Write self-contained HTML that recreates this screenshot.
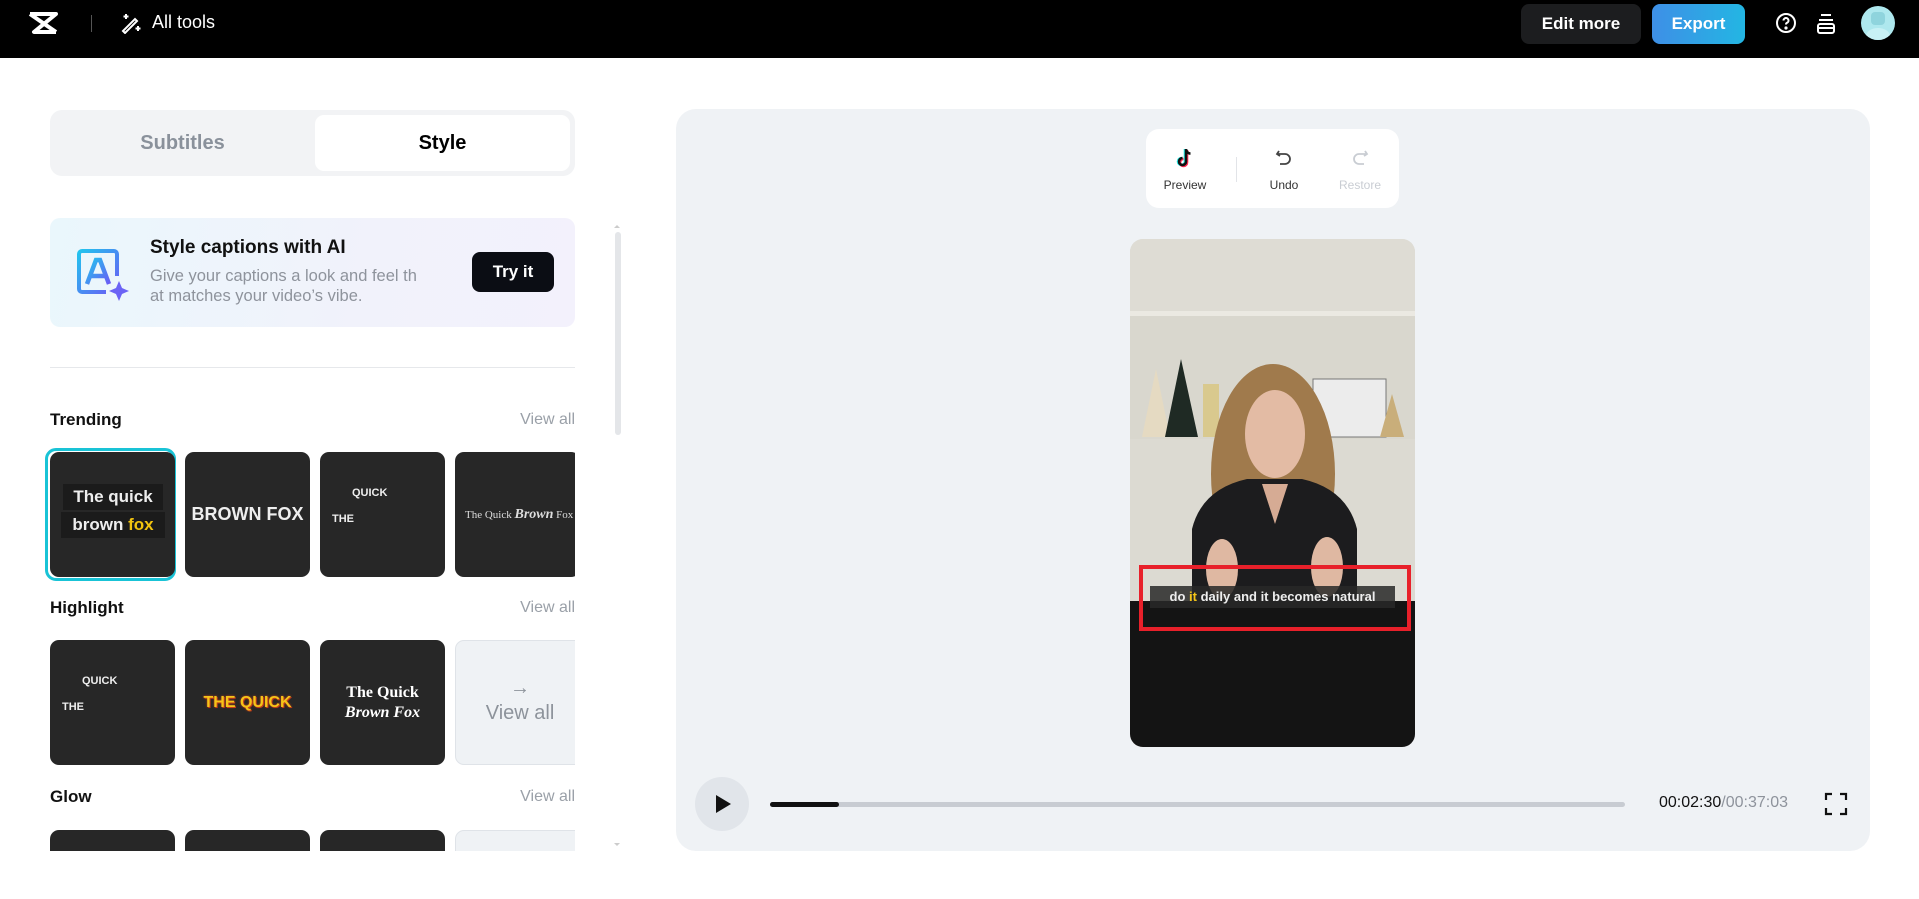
<!DOCTYPE html>
<html><head><meta charset="utf-8"><style>
*{margin:0;padding:0;box-sizing:border-box}
html,body{overflow:hidden}
body{width:1919px;height:899px;background:#fff;font-family:"Liberation Sans",sans-serif;position:relative}
.a{position:absolute}
.hdr{left:0;top:0;width:1919px;height:58px;background:#000}
.card{background:#272727;border-radius:9px;width:125px;height:125px;overflow:hidden}
.lbl{font-size:17px;font-weight:bold;color:#111}
.va{font-size:16px;color:#9aa0a8;right:1344px}
</style></head><body>
<div class="a hdr">
 <svg class="a" style="left:27px;top:11px" width="32" height="24" viewBox="0 0 32 24"><path d="M3 3h26L7 21h22" stroke="#fff" stroke-width="4" fill="none" stroke-linejoin="round"/><path d="M3 3l26 18" stroke="#fff" stroke-width="4"/></svg>
 <div class="a" style="left:91px;top:15px;width:1px;height:17px;background:#555"></div>
 <svg class="a" style="left:120px;top:12px" width="22" height="22" viewBox="0 0 22 22" fill="none" stroke="#fff" stroke-width="2"><path d="M3 19L15 7l2 2L5 21z"/><path d="M6 2v5M3.5 4.5h5M18 14v5M15.5 16.5h5"/></svg>
 <div class="a" style="left:152px;top:12px;color:#fff;font-size:18px">All tools</div>
 <div class="a" style="left:1521px;top:4px;width:120px;height:40px;background:#1c1d1f;border-radius:8px;color:#fff;font-size:17px;font-weight:bold;text-align:center;line-height:40px">Edit more</div>
 <div class="a" style="left:1652px;top:4px;width:93px;height:40px;background:linear-gradient(90deg,#3e8fe6,#23b6e3);border-radius:8px;color:#fff;font-size:17px;font-weight:bold;text-align:center;line-height:40px">Export</div>
 <svg class="a" style="left:1775px;top:12px" width="22" height="22" viewBox="0 0 22 22" fill="none" stroke="#fff" stroke-width="2"><circle cx="11" cy="11" r="9"/><path d="M8.5 8.5a2.5 2.5 0 1 1 3.5 2.3c-.7.4-1 .9-1 1.7"/><circle cx="11" cy="16" r=".6" fill="#fff"/></svg>
 <svg class="a" style="left:1815px;top:12px" width="22" height="24" viewBox="0 0 22 24" fill="none" stroke="#fff" stroke-width="2"><path d="M6 3h10M4 8h14"/><rect x="3" y="12" width="16" height="9" rx="2"/><path d="M3 16h16"/></svg>
 <div class="a" style="left:1861px;top:6px;width:34px;height:34px;border-radius:50%;background:#aee8ee;overflow:hidden"><div class="a" style="left:10px;top:6px;width:14px;height:13px;border-radius:4px;background:#8fd4dd"></div><div class="a" style="left:5px;top:22px;width:24px;height:16px;border-radius:50%;background:#c8f1f5"></div></div>
</div>

<div class="a" style="left:50px;top:110px;width:525px;height:66px;background:#f2f3f5;border-radius:12px"></div>
<div class="a" style="left:315px;top:115px;width:255px;height:56px;background:#fff;border-radius:9px"></div>
<div class="a" style="left:50px;top:110px;width:265px;height:66px;line-height:66px;text-align:center;font-size:20px;font-weight:bold;color:#8a919b">Subtitles</div>
<div class="a" style="left:315px;top:110px;width:255px;height:66px;line-height:66px;text-align:center;font-size:20px;font-weight:bold;color:#000">Style</div>

<div class="a" style="left:50px;top:218px;width:525px;height:109px;border-radius:10px;background:linear-gradient(100deg,#eaf7fc,#f1f2fb 60%,#f3f1fc)"></div>
<svg class="a" style="left:76px;top:248px" width="54" height="54" viewBox="0 0 54 54"><defs><linearGradient id="g" x1="0" y1="0" x2="1" y2="1"><stop offset="0" stop-color="#22c3ee"/><stop offset="1" stop-color="#6a5cf5"/></linearGradient></defs><path d="M30 44H6a3 3 0 0 1-3-3V6a3 3 0 0 1 3-3h32a3 3 0 0 1 3 3v22" fill="none" stroke="url(#g)" stroke-width="4"/><path d="M11 36l9-24h4l9 24M14 28h16" fill="none" stroke="url(#g)" stroke-width="4.5"/><path d="M43 33l3 7 7 3-7 3-3 7-3-7-7-3 7-3z" fill="#6b63f5"/></svg>
<div class="a" style="left:150px;top:237px;font-size:19px;font-weight:bold;color:#111">Style captions with AI</div>
<div class="a" style="left:150px;top:266px;font-size:16.5px;line-height:20px;color:#8e939c;width:320px">Give your captions a look and feel th<br>at matches your video’s vibe.</div>
<div class="a" style="left:472px;top:252px;width:82px;height:40px;background:#0b0d14;border-radius:8px;color:#fff;font-size:17px;font-weight:bold;text-align:center;line-height:40px">Try it</div>

<div class="a" style="left:50px;top:367px;width:525px;height:1px;background:#e6e8eb"></div>
<div class="a" style="left:614px;top:222px;width:0;height:0;border:3px solid transparent;border-bottom-color:#ccc"></div>
<div class="a" style="left:615px;top:232px;width:6px;height:203px;background:#e4e6e9;border-radius:3px"></div>
<div class="a" style="left:614px;top:843px;width:0;height:0;border:3px solid transparent;border-top-color:#ccc"></div>

<div class="a lbl" style="left:50px;top:410px">Trending</div><div class="a va" style="top:411px">View all</div>
<div class="a lbl" style="left:50px;top:598px">Highlight</div><div class="a va" style="top:599px">View all</div>
<div class="a lbl" style="left:50px;top:787px">Glow</div><div class="a va" style="top:788px">View all</div>

<div class="a" style="left:44px;top:446px;width:531px;height:137px;overflow:hidden">
 <div class="a" style="left:1px;top:2px;width:131px;height:133px;border:3px solid #19c3d6;border-radius:11px"></div>
 <div class="a card" style="left:6px;top:6px">
  <div class="a" style="left:13px;top:32px;width:100px;height:26px;background:#1b1b1b;color:#eee;font-weight:bold;font-size:17px;text-align:center;line-height:26px">The quick</div>
  <div class="a" style="left:11px;top:60px;width:104px;height:26px;background:#1b1b1b;color:#eee;font-weight:bold;font-size:17px;text-align:center;line-height:26px">brown <span style="color:#f2c40f">fox</span></div>
 </div>
 <div class="a card" style="left:141px;top:6px"><div style="text-align:center;line-height:125px;color:#eee;font-weight:bold;font-size:18px">BROWN FOX</div></div>
 <div class="a card" style="left:276px;top:6px"><div class="a" style="left:32px;top:35px;color:#eee;font-size:11px;font-weight:bold">QUICK</div><div class="a" style="left:12px;top:61px;color:#eee;font-size:11px;font-weight:bold">THE</div></div>
 <div class="a card" style="left:411px;top:6px"><div class="a" style="left:10px;top:55px;color:#ddd;font-family:'Liberation Serif',serif;font-size:11px;white-space:nowrap">The Quick <b style="font-size:14px;font-style:italic">Brown</b> Fox</div></div>
</div>
<div class="a" style="left:50px;top:640px;width:525px;height:125px;overflow:hidden">
 <div class="a card" style="left:0;top:0"><div class="a" style="left:32px;top:35px;color:#eee;font-size:11px;font-weight:bold">QUICK</div><div class="a" style="left:12px;top:61px;color:#eee;font-size:11px;font-weight:bold">THE</div></div>
 <div class="a card" style="left:135px;top:0"><div style="text-align:center;line-height:125px;color:#f5c518;font-weight:bold;font-size:16px;text-shadow:0 0 2px #d2451c,1px 1px 0 #c0391a">THE QUICK</div></div>
 <div class="a card" style="left:270px;top:0"><div style="padding-top:43px;text-align:center;color:#fff;font-family:'Liberation Serif',serif;font-weight:bold;font-size:16px;line-height:20px">The Quick<br><i>Brown Fox</i></div></div>
 <div class="a" style="left:405px;top:0;width:130px;height:125px;background:#eff2f5;border:1px solid #dfe3e8;border-radius:9px;text-align:center;color:#8d939b"><div style="font-size:20px;margin-top:36px">→</div><div style="font-size:20px;margin-top:2px">View all</div></div>
</div>
<div class="a" style="left:50px;top:830px;width:525px;height:21px;overflow:hidden">
 <div class="a card" style="left:0;top:0"></div><div class="a card" style="left:135px;top:0"></div><div class="a card" style="left:270px;top:0"></div>
 <div class="a" style="left:405px;top:0;width:130px;height:125px;background:#eff2f5;border:1px solid #dfe3e8;border-radius:9px"></div>
</div>

<div class="a" style="left:676px;top:109px;width:1194px;height:742px;background:#eff2f5;border-radius:20px"></div>
<div class="a" style="left:1146px;top:129px;width:253px;height:79px;background:#fff;border-radius:13px"></div>
<svg class="a" style="left:1175px;top:147px" width="20" height="22" viewBox="0 0 20 22"><path d="M11 2v12.5a3.5 3.5 0 1 1-3.5-3.5" fill="none" stroke="#25f4ee" stroke-width="2.6" transform="translate(-1 0)"/><path d="M11 2v12.5a3.5 3.5 0 1 1-3.5-3.5" fill="none" stroke="#fe2c55" stroke-width="2.6" transform="translate(1 1)"/><path d="M11 2v12.5a3.5 3.5 0 1 1-3.5-3.5M11 2c0 2.5 2 4.5 4.5 4.5" fill="none" stroke="#111" stroke-width="2.6"/></svg>
<div class="a" style="left:1155px;top:178px;width:60px;text-align:center;font-size:12px;color:#333">Preview</div>
<div class="a" style="left:1236px;top:157px;width:1px;height:25px;background:#e2e4e8"></div>
<svg class="a" style="left:1274px;top:148px" width="20" height="20" viewBox="0 0 20 20" fill="none" stroke="#444" stroke-width="1.8"><path d="M5 3L3 6l3 2"/><path d="M3.5 6H11a5 5 0 0 1 0 10H6"/></svg>
<div class="a" style="left:1254px;top:178px;width:60px;text-align:center;font-size:12px;color:#333">Undo</div>
<svg class="a" style="left:1350px;top:148px" width="20" height="20" viewBox="0 0 20 20" fill="none" stroke="#c9cdd3" stroke-width="1.8"><path d="M15 3l2 3-3 2"/><path d="M16.5 6H9a5 5 0 0 0 0 10h5"/></svg>
<div class="a" style="left:1330px;top:178px;width:60px;text-align:center;font-size:12px;color:#c9cdd3">Restore</div>

<div class="a" style="left:1130px;top:239px;width:285px;height:508px;border-radius:13px;overflow:hidden;background:#dcdad2">
<svg width="285" height="508" viewBox="0 0 285 508">
 <rect width="285" height="74" fill="#dedcd4"/>
 <rect y="72" width="285" height="5" fill="#ebe9e2"/>
 <rect y="77" width="285" height="125" fill="#d9d7ce"/>
 <rect y="200" width="285" height="180" fill="#dcdad2"/>
 <path d="M26 130l-14 68h28z" fill="#e5dac2"/>
 <path d="M51 120l-16 78h33z" fill="#1f2a24"/>
 <rect x="73" y="145" width="16" height="53" fill="#d9c98e"/>
 <rect x="183" y="140" width="73" height="58" fill="#ececec" stroke="#777" stroke-width="1"/>
 <path d="M262 155l-12 43h24z" fill="#c9ae7a"/>
 <ellipse cx="143" cy="235" rx="62" ry="110" fill="#a07a4c"/>
 <path d="M62 508V290q10-40 55-50h55q45 10 55 50v218z" fill="#1c1c1e"/>
 <ellipse cx="145" cy="195" rx="30" ry="44" fill="#e3bba4"/>
 <path d="M132 245l13 40 13-40z" fill="#d6ab94"/>
 <ellipse cx="92" cy="330" rx="16" ry="30" fill="#dfb8a2"/>
 <ellipse cx="197" cy="328" rx="16" ry="30" fill="#dfb8a2"/>
 <rect y="362" width="285" height="146" fill="#141414"/>
</svg>
</div>
<div class="a" style="left:1139px;top:565px;width:272px;height:66px;border:4px solid #e8202a"></div>
<div class="a" style="left:1150px;top:586px;width:245px;height:22px;background:rgba(40,40,40,.85);color:#eee;font-size:13px;font-weight:bold;text-align:center;line-height:22px;white-space:nowrap">do <span style="color:#f5c518">it</span> daily and it becomes natural</div>

<div class="a" style="left:695px;top:777px;width:54px;height:54px;border-radius:50%;background:#e1e5ea"></div>
<div class="a" style="left:716px;top:795px;width:0;height:0;border-left:15px solid #111;border-top:9px solid transparent;border-bottom:9px solid transparent"></div>
<div class="a" style="left:770px;top:802px;width:855px;height:5px;background:#c8ccd2;border-radius:3px"></div>
<div class="a" style="left:770px;top:802px;width:69px;height:5px;background:#111;border-radius:3px"></div>
<div class="a" style="left:1659px;top:794px;font-size:16px;color:#111">00:02:30<span style="color:#8e939c">/00:37:03</span></div>
<svg class="a" style="left:1824px;top:792px" width="24" height="24" viewBox="0 0 24 24" fill="none" stroke="#111" stroke-width="2.2"><path d="M2 8V2h6M16 2h6v6M22 16v6h-6M8 22H2v-6"/></svg>
</body></html>
